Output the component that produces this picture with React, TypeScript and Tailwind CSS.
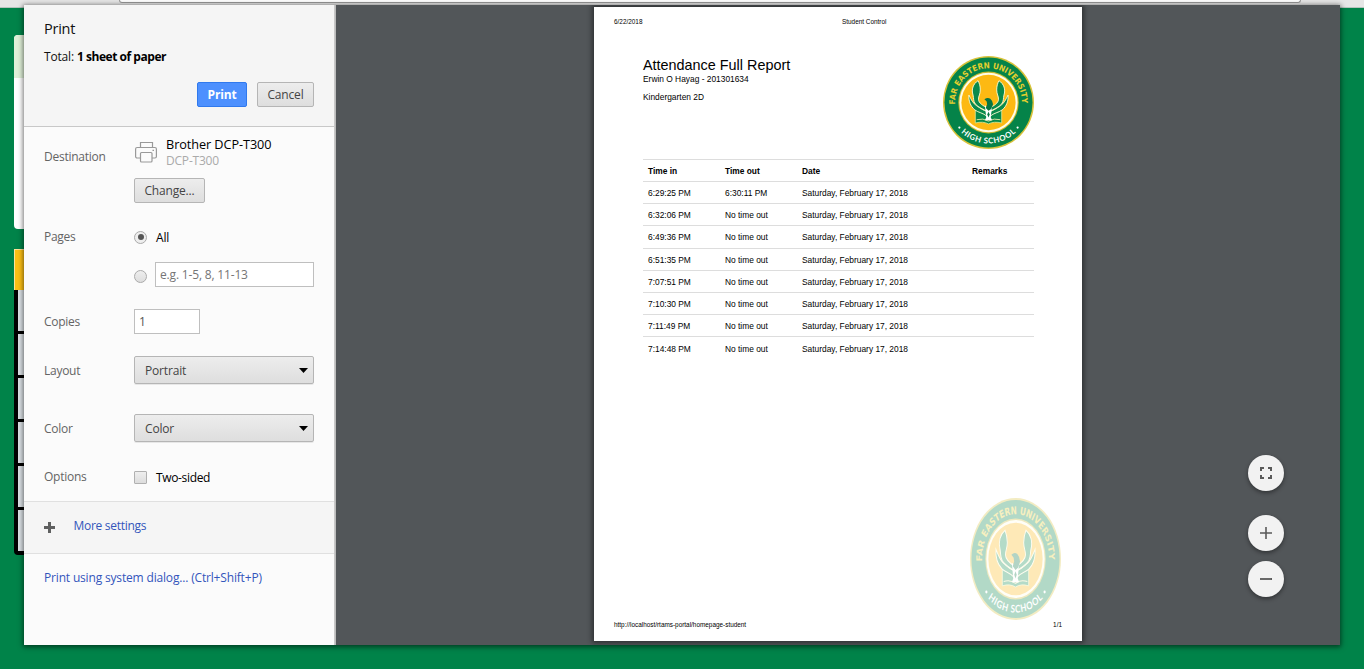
import React from "react";

const rows = [
  ["6:29:25 PM", "6:30:11 PM"],
  ["6:32:06 PM", "No time out"],
  ["6:49:36 PM", "No time out"],
  ["6:51:35 PM", "No time out"],
  ["7:07:51 PM", "No time out"],
  ["7:10:30 PM", "No time out"],
  ["7:11:49 PM", "No time out"],
  ["7:14:48 PM", "No time out"],
];

function Wing() {
  return (
    <g fill="#0a8a4c" stroke="#fffbd0" strokeWidth="1">
      <path d="M28.5 42C28 48 30 54 35 58C39 61 44 61 48.5 65L49.5 60C43 58 41 56 37 53.5C33 51 31 47 28.5 42Z" />
      <path d="M38.5 26.5C33 30 31 36 33 42C34 46 33 48 35.5 51.5C39 55.5 44 57 49.5 60L49 56C44 53.5 39 50.5 39 46.5C39 43 41 41 41 36.5C41 32 40 29.5 38.5 26.5Z" />
    </g>
  );
}

function Seal({ id, className }: { id: string; className: string }) {
  return (
    <svg viewBox="0 0 100 100" preserveAspectRatio="none" className={className}>
      <defs>
        <path id={id + "-top"} d="M13.8 56A36.7 36.7 0 1 1 86.2 56" />
        <path id={id + "-bottom"} d="M10.4 69.2A44 44 0 0 0 89.6 69.2" />
      </defs>
      <circle cx="50" cy="50" r="50" fill="#d8c23a" />
      <circle cx="50" cy="50" r="48.4" fill="#058349" />
      <circle cx="50" cy="50" r="33.2" fill="#c9b92f" />
      <circle cx="50" cy="50" r="32" fill="#fffde8" />
      <circle cx="50" cy="50" r="29.8" fill="#fdb913" />
      <text fill="#e6cf2f" fontFamily="DejaVu Sans, sans-serif" fontWeight="700" fontSize="8.8">
        <textPath href={"#" + id + "-top"} startOffset="4" textLength="118" lengthAdjust="spacingAndGlyphs">FAR EASTERN UNIVERSITY</textPath>
      </text>
      <text fill="#ffffff" fontFamily="Lato, sans-serif" fontWeight="700" fontSize="8.6" textAnchor="middle">
        <textPath href={"#" + id + "-bottom"} startOffset="50%" textLength="66" lengthAdjust="spacing">HIGH SCHOOL</textPath>
      </text>
      <circle cx="18" cy="77" r="1.2" fill="#fff" />
      <circle cx="82" cy="77" r="1.2" fill="#fff" />
      <path d="M35.5 58.5V72Q44 70 50 73Q56 70 64.5 72V58.5Q56 57.5 50 60Q44 57.5 35.5 58.5Z" fill="#0a8a4c" stroke="#e8f0a0" strokeWidth="0.8" />
      <path d="M37 68.5Q44 66.5 50 70Q56 66.5 63 68.5" fill="none" stroke="#fff3b0" strokeWidth="0.9" />
      <Wing />
      <g transform="translate(100 0) scale(-1 1)"><Wing /></g>
      <path d="M46 53L49 55L50 60L51 55L54 53L52.5 66L54 69H46L47.5 66Z" fill="#fff" />
      <path d="M45.5 46.5Q49 44 52 46Q54.5 48 55 52L53 57L50 59L47 56L48.5 52L48 49Z" fill="#087542" />
      <path d="M50 60L51.3 63L50 66L48.7 63Z" fill="#087542" />
    </svg>
  );
}

function Row({ label, children, className }: { label: string; children: React.ReactNode; className: string }) {
  return (
    <div className={"flex " + className}>
      <div className="w-[90px] tracking-[-0.26px] text-[#646464]">{label}</div>
      {children}
    </div>
  );
}

function Select({ value }: { value: string }) {
  return (
    <div className="flex h-7 w-[180px] items-center justify-between rounded-[2px] border border-[#b5b5b5] bg-linear-to-b from-[#ededed] to-[#dedede] pr-[5px] pl-2.5 text-[#444] shadow-[0_1px_0_rgba(0,0,0,0.08)]">
      <span className="pt-px">{value}</span>
      <svg width="9" height="5" viewBox="0 0 9 5"><path d="M0 0H9L4.5 5Z" fill="#000" /></svg>
    </div>
  );
}

function Zoom({ d, className }: { d: string; className: string }) {
  return (
    <div className={"flex size-9 items-center justify-center rounded-full bg-[#f2f2f2] shadow-[0_2px_4px_rgba(0,0,0,0.4)] " + className}>
      <svg width="24" height="24" viewBox="0 0 24 24" fill="#5a5a5a"><path d={d} /></svg>
    </div>
  );
}

function Settings() {
  return (
    <section className="flex w-[311px] shrink-0 flex-col border-r border-[#c8c8c8] bg-[#fbfbfb] font-['Open_Sans','Noto_Sans',sans-serif] text-[12px] leading-4 tracking-[-0.17px]">
      <header className="h-[122px] border-b border-[#c8c8c8] bg-[#f5f5f5] px-5 pt-[14px]">
        <h1 className="text-[14.5px] leading-5 tracking-[-0.25px] text-[#111]">Print</h1>
        <p className="mt-[10px] text-[#111]">Total: <b className="font-bold tracking-[-0.46px] text-black">1 sheet of paper</b></p>
        <div className="mt-[17px] flex justify-end gap-2.5">
          <button className="h-[25px] w-[50px] rounded-[2px] border border-[#3079ed] bg-[#4d90fe] pt-px font-bold text-white">Print</button>
          <button className="h-[25px] w-[57px] rounded-[2px] border border-[#b5b5b5] bg-linear-to-b from-[#ededed] to-[#dedede] pt-px text-[#444]">Cancel</button>
        </div>
      </header>
      <div className="h-[374px] px-5 pt-2">
        <Row label="Destination" className="h-[68px] [&>div:first-child]:pt-[14px]">
          <div>
            <div className="flex h-[43px]">
              <svg width="24" height="24" viewBox="0 0 24 24" className="mt-[5px]" fill="#fbfbfb" stroke="#999" strokeWidth="1.2">
                <path d="M6.5 8V2.5H18.5V8" />
                <rect x="1.6" y="7.5" width="20.8" height="10.5" rx="1.5" />
                <rect x="6.5" y="12.5" width="11.5" height="9.5" rx="1" />
                <path d="M18.5 10.3H20" />
              </svg>
              <div className="ml-2 pt-px">
                <div className="text-[12.7px] tracking-[-0.07px] text-black">Brother DCP-T300</div>
                <div className="pt-px text-[12px] tracking-[-0.2px] text-[#aaa]">DCP-T300</div>
              </div>
            </div>
            <button className="h-[25px] w-[71px] rounded-[2px] border border-[#b5b5b5] bg-linear-to-b from-[#ededed] to-[#dedede] pt-px text-[#444]">Change...</button>
          </div>
        </Row>
        <Row label="Pages" className="mt-[26px] h-[58px]">
          <div className="w-[180px]">
            <div className="flex items-center gap-2 text-black">
              <span className="flex size-[13px] items-center justify-center rounded-full border border-[#aaa] bg-[#eee]"><span className="size-[6px] rounded-full bg-[#555]" /></span>
              <span className="h-4 pt-px pl-px">All</span>
            </div>
            <div className="mt-[17px] flex items-center gap-2">
              <span className="mt-[3px] size-[13px] rounded-full border border-[#aaa] bg-linear-to-b from-[#eee] to-[#ddd]" />
              <div className="h-[25px] w-[159px] border border-[#bfbfbf] bg-white pt-1 pl-1 text-[#757575]">e.g. 1-5, 8, 11-13</div>
            </div>
          </div>
        </Row>
        <Row label="Copies" className="mt-[22px] h-[25px] items-center">
          <div className="h-[25px] w-[66px] border border-[#bfbfbf] bg-white pt-1 pl-1 text-[#555]">1</div>
        </Row>
        <Row label="Layout" className="mt-[22px] h-7 items-center [&>div:first-child]:pt-0.5"><Select value="Portrait" /></Row>
        <Row label="Color" className="mt-[30px] h-7 items-center [&>div:first-child]:pt-0.5"><Select value="Color" /></Row>
        <Row label="Options" className="mt-[27px] h-4 items-center">
          <span className="size-[13px] rounded-[1px] border border-[#b0b0b0] bg-linear-to-b from-[#eee] to-[#ddd]" />
          <span className="ml-[9px] pt-0.5 tracking-[-0.35px] text-black">Two-sided</span>
        </Row>
      </div>
      <div className="flex h-[53px] items-center border-y border-[#e0e0e0] bg-[#f5f5f5] px-5 text-[#3355bb]">
        <svg width="11" height="11" viewBox="0 0 11 11"><path d="M4 0H7V4H11V7H7V11H4V7H0V4H4Z" fill="#5f6060" /></svg>
        <span className="mb-[3px] ml-[18.5px] tracking-[-0.28px]">More settings</span>
      </div>
      <div className="px-5 pt-4 text-[#3355bb]">Print using system dialog... (Ctrl+Shift+P)</div>
    </section>
  );
}

function Sheet() {
  return (
    <article className="mt-[2px] flex h-[634px] w-[488px] flex-col bg-white font-['Liberation_Sans',Arial,sans-serif] text-[8.4px] leading-[10px] text-black shadow-[0_0_5px_2px_rgba(0,0,0,0.45)]">
      <div className="flex h-[49px] pt-[10px] pl-5 text-[6.4px]">
        <span className="w-[228px]">6/22/2018</span><span>Student Control</span>
      </div>
      <div className="flex h-[103px] justify-between pr-[48px] pl-[49px]">
        <div>
          <h2 className="pt-px text-[14.4px] leading-[17px]">Attendance Full Report</h2>
          <p>Erwin O Hayag - 201301634</p>
          <p className="mt-2">Kindergarten 2D</p>
        </div>
        <Seal id="head" className="h-[93px] w-[91px]" />
      </div>
      <div className="ml-[49px] w-[391px]">
        <div className="grid h-[23px] grid-cols-[77px_77px_170px_1fr] items-center border-y border-[#ddd] pl-[5px] font-bold *:pt-px">
          <span>Time in</span><span>Time out</span><span>Date</span><span>Remarks</span>
        </div>
        {rows.map(([a, b], i) => (
          <div key={a} className={"grid h-[22.2px] grid-cols-[77px_77px_170px] items-center pl-[5px] *:pt-px " + (i < 7 ? "border-b border-[#ddd]" : "")}>
            <span>{a}</span><span>{b}</span><span>Saturday, February 17, 2018</span>
          </div>
        ))}
      </div>
      <div className="mt-auto flex h-[122px] justify-end pr-[21px]"><Seal id="foot" className="h-[122px] w-[91px] opacity-30" /></div>
      <div className="mb-[11px] flex justify-between pr-5 pl-5 text-[6.4px]">
        <span>http://localhost/rtams-portal/homepage-student</span><span>1/1</span>
      </div>
    </article>
  );
}

export default function App() {
  return (
    <main className="relative h-[669px] w-[1364px] overflow-hidden bg-[#008349]">
      <div className="h-2 border-b border-[#b8c4be] bg-[#e6e6e6] pl-[119px]">
        <div className="h-[3px] w-[1182px] rounded-b-[3px] border border-t-0 border-[#999] bg-white" />
      </div>
      <div className="ml-[14px] w-20 pt-[27px]">
        <div className="h-[194px] rounded bg-white"><div className="h-[43px] rounded-t bg-[#dff0d8]" /></div>
        <div className="mt-5 h-[41px] border-t border-l border-[#ffe39a] bg-[#fdc116]" />
        <div className="rounded-bl bg-black pb-px">
          {[0, 1, 2, 3, 4, 5].map((n) => (
            <div key={n} className="flex h-[44px] flex-col pb-[3px]">
              <div className="ml-1 grow bg-[#dce2e6]" />
            </div>
          ))}
        </div>
      </div>
      <div className="absolute top-[5px] left-6 flex h-[640px] w-[1316px] bg-[#525659] shadow-[0_1px_5px_1px_rgba(0,0,0,0.55)]">
        <Settings />
        <div className="relative flex grow overflow-hidden border-l border-[#bbb]">
          <div className="flex w-full pl-[258px]"><Sheet /></div>
          <div className="absolute top-[450px] right-14 flex flex-col">
            <Zoom className="" d="M6 14H8V16H10V18H6ZM6 10V6H10V8H8V10ZM14 6H18V10H16V8H14ZM16 14H18V18H14V16H16Z" />
            <Zoom className="mt-6" d="M11.2 6H12.8V11.2H18V12.8H12.8V18H11.2V12.8H6V11.2H11.2Z" />
            <Zoom className="mt-2.5" d="M6 11.1H18V12.9H6Z" />
          </div>
        </div>
      </div>
    </main>
  );
}
